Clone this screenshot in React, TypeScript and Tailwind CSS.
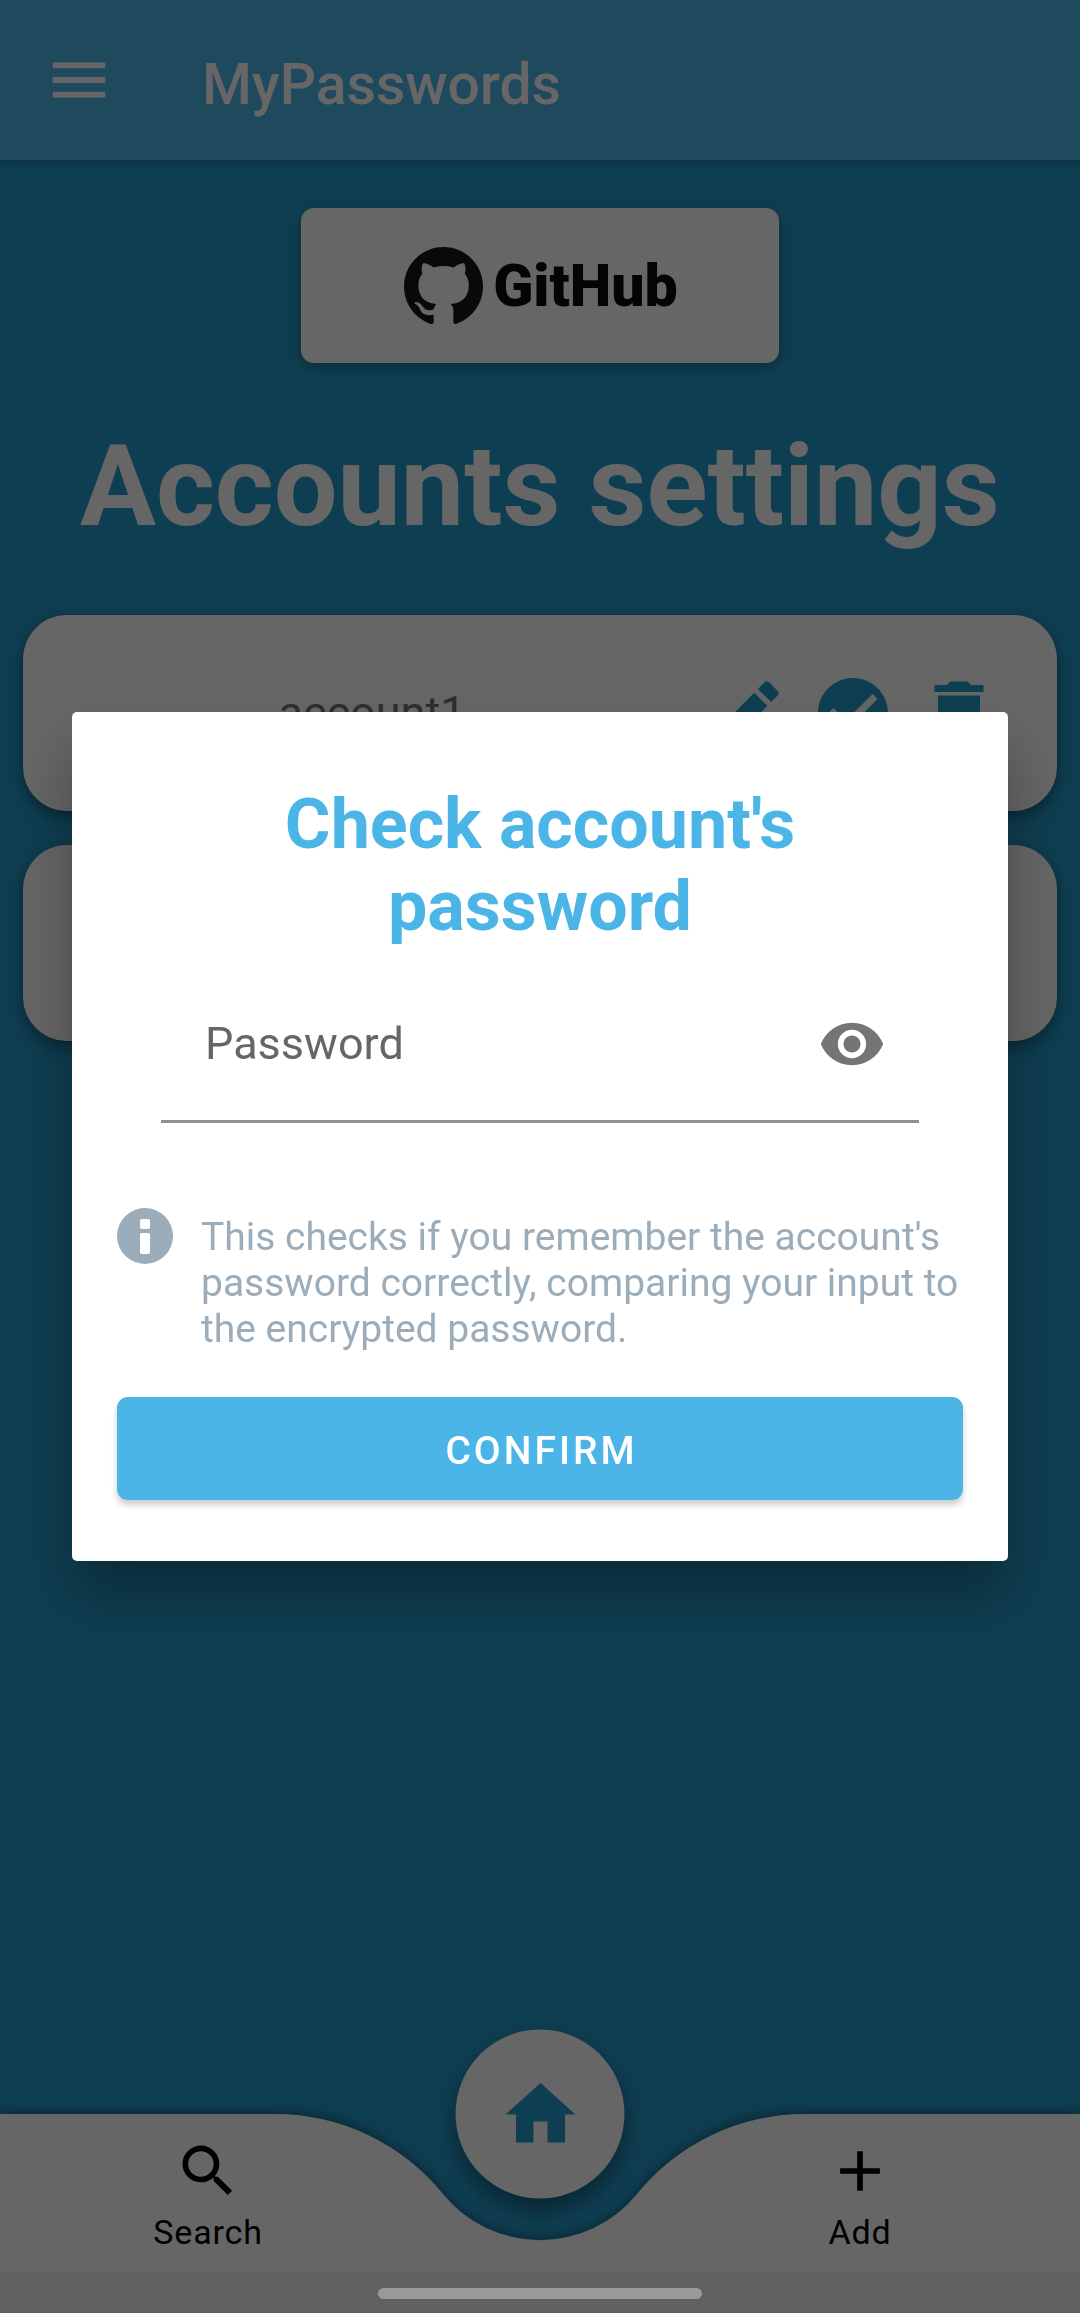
import React, { useState } from "react";
import { MdMenu, MdEdit, MdCheckCircle, MdDelete, MdHome, MdSearch, MdAdd, MdVisibility } from "react-icons/md";

function GitHubMark() {
  return (
    <svg viewBox="0 0 16 16" className="h-[79px] w-[79px] fill-[#181717]" aria-hidden="true">
      <path d="M8 0C3.58 0 0 3.58 0 8c0 3.54 2.29 6.53 5.47 7.59.4.07.55-.17.55-.38 0-.19-.01-.82-.01-1.49-2.01.37-2.53-.49-2.69-.94-.09-.23-.48-.94-.82-1.13-.28-.15-.68-.52-.01-.53.63-.01 1.08.58 1.23.82.72 1.21 1.87.87 2.33.66.07-.52.28-.87.51-1.07-1.78-.2-3.64-.89-3.64-3.95 0-.87.31-1.59.82-2.15-.08-.2-.36-1.02.08-2.12 0 0 .67-.21 2.2.82.64-.18 1.32-.27 2-.27.68 0 1.36.09 2 .27 1.53-1.04 2.2-.82 2.2-.82.44 1.1.16 1.92.08 2.12.51.56.82 1.27.82 2.15 0 3.07-1.87 3.75-3.65 3.95.29.25.54.73.54 1.48 0 1.07-.01 1.93-.01 2.2 0 .21.15.46.55.38A8.013 8.013 0 0 0 16 8c0-4.42-3.58-8-8-8z" />
    </svg>
  );
}

function InfoIcon() {
  return (
    <svg viewBox="0 0 56 56" className="h-14 w-14 shrink-0" aria-hidden="true">
      <circle cx="28" cy="28" r="28" className="fill-[#9badba]" />
      <rect x="23" y="11" width="10" height="10" rx="2" className="fill-white" />
      <rect x="23" y="25" width="10" height="21" rx="2" className="fill-white" />
    </svg>
  );
}

function AccountCard({ name }: { name?: string }) {
  return (
    <li className="flex h-[196px] items-center gap-[22px] rounded-[44px] bg-white pr-14 pl-[38px] shadow-[0_6px_16px_rgba(0,0,0,0.4)]">
      <span className="flex-1 text-center text-[45px] text-[#737373]">{name}</span>
      <button type="button" aria-label="Edit account">
        <MdEdit className="size-[84px]" />
      </button>
      <button type="button" aria-label="Check account's password">
        <MdCheckCircle className="size-[84px]" />
      </button>
      <button type="button" aria-label="Delete account">
        <MdDelete className="size-[84px]" />
      </button>
    </li>
  );
}

function BottomBar() {
  return (
    <nav className="relative">
      <div className="flex h-[158px] drop-shadow-[0_-3px_6px_rgba(0,0,0,0.35)]">
        <div className="-mr-px flex-1 bg-white" />
        <svg viewBox="0 0 530 158" className="h-[158px] w-[530px] shrink-0 fill-white" aria-hidden="true">
          <path d="M0 0A216 216 0 0 1 168 80A125 125 0 0 0 362 80A216 216 0 0 1 530 0V158H0Z" />
        </svg>
        <div className="-ml-px flex-1 bg-white" />
      </div>
      <div className="relative h-[41px] bg-[#f2f2f2]" />
      <div className="absolute inset-x-0 top-0 flex justify-between pt-[23px] pr-[138px] pl-[126px] text-[34px] leading-[40px] tracking-wide text-black">
        <button type="button" className="flex w-[164px] flex-col items-center gap-[7px]">
          <MdSearch className="size-[68px]" />
          Search
        </button>
        <button type="button" className="flex w-[164px] flex-col items-center gap-[7px]">
          <MdAdd className="size-[68px]" />
          Add
        </button>
      </div>
      <button
        type="button"
        aria-label="Home"
        className="absolute top-0 left-1/2 flex size-[169px] -translate-x-1/2 -translate-y-1/2 items-center justify-center rounded-full bg-white text-[#259bcb] shadow-[0_12px_24px_rgba(0,0,0,0.4)]"
      >
        <MdHome className="size-[84px]" />
      </button>
    </nav>
  );
}

function CheckPasswordDialog() {
  const [password, setPassword] = useState("");
  const [visible, setVisible] = useState(false);
  return (
    <div className="fixed inset-0 flex items-center justify-center bg-black/60 px-[72px] pb-[40px]">
      <form
        role="dialog"
        aria-modal="true"
        aria-labelledby="dialog-title"
        onSubmit={(e) => e.preventDefault()}
        className="flex w-full flex-col rounded-[5px] bg-white px-[45px] pt-[71px] pb-[61px] shadow-[0_36px_60px_rgba(0,0,0,0.3)]"
      >
        <h2 id="dialog-title" className="mx-auto max-w-[600px] text-center text-[70px] leading-[82px] font-bold text-[#4bb5e7]">
          Check account's password
        </h2>
        <div className="mx-11 mt-[21px] flex h-[155px] items-center border-b-[3px] border-[#929292] pr-[33px] pl-11">
          <input
            type={visible ? "text" : "password"}
            aria-label="Password"
            placeholder="Password"
            value={password}
            onChange={(e) => setPassword(e.target.value)}
            className="min-w-0 flex-1 text-[45px] leading-[52px] text-black outline-none placeholder:text-[#666666]"
          />
          <button type="button" aria-label="Show password" onClick={() => setVisible(!visible)}>
            <MdVisibility className="size-[68px] text-[#757575]" />
          </button>
        </div>
        <div className="mt-[85px] flex gap-[28px]">
          <InfoIcon />
          <p className="pt-[6px] text-[39px] leading-[46px] text-[#9badba]">
            This checks if you remember the account's password correctly, comparing your input to the encrypted password.
          </p>
        </div>
        <button
          type="submit"
          className="mt-[45px] h-[103px] rounded-[11px] bg-[#4bb5e7] pt-[5px] pl-[3px] text-[39px] font-medium tracking-[3px] text-white shadow-[0_5px_6px_rgba(0,0,0,0.2)]"
        >
          CONFIRM
        </button>
      </form>
    </div>
  );
}

export default function App() {
  return (
    <div className="flex min-h-screen flex-col bg-[#259bcb] font-[Roboto,sans-serif]">
      <header className="flex h-[160px] items-center gap-[88px] bg-[#4fb6e6] pl-[44px] text-white shadow-[0_4px_10px_rgba(0,0,0,0.2)]">
        <button type="button" aria-label="Open menu">
          <MdMenu className="size-[70px]" />
        </button>
        <span className="pt-[10px] text-[57px] font-medium">MyPasswords</span>
      </header>
      <main className="flex flex-1 flex-col items-center px-[23px] pt-12">
        <a
          href="#github"
          aria-label="GitHub"
          className="flex h-[155px] w-[478px] items-center justify-center gap-[10px] rounded-[13px] bg-white pt-[2px] pl-[2px] shadow-[0_4px_14px_rgba(0,0,0,0.3)]"
        >
          <GitHubMark />
          <span className="text-[59px] font-black text-[#0a0a0a]">GitHub</span>
        </a>
        <h1 className="mt-[59px] text-[113px] leading-[130px] font-bold text-white">Accounts settings</h1>
        <ul className="mt-[63px] flex w-full flex-col gap-[34px] text-[#259bcb]">
          <AccountCard name="account1" />
          <AccountCard />
        </ul>
      </main>
      <BottomBar />
      <CheckPasswordDialog />
      <div className="fixed bottom-[14px] left-1/2 h-[11px] w-[324px] -translate-x-1/2 rounded-full bg-[#999999]" />
    </div>
  );
}
